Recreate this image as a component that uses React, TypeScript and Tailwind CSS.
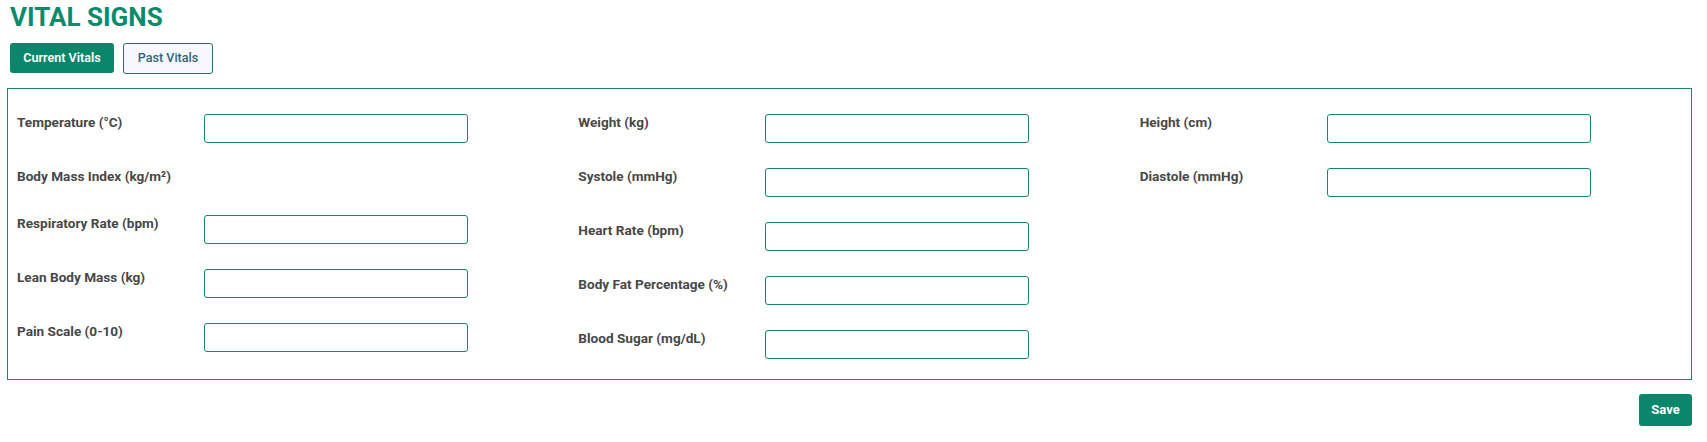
import React from 'react';

type Field = { label: string; input: boolean };

const columns: Field[][] = [
    [
        { label: 'Temperature (°C)', input: true },
        { label: 'Body Mass Index (kg/m²)', input: false },
        { label: 'Respiratory Rate (bpm)', input: true },
        { label: 'Lean Body Mass (kg)', input: true },
        { label: 'Pain Scale (0-10)', input: true },
    ],
    [
        { label: 'Weight (kg)', input: true },
        { label: 'Systole (mmHg)', input: true },
        { label: 'Heart Rate (bpm)', input: true },
        { label: 'Body Fat Percentage (%)', input: true },
        { label: 'Blood Sugar (mg/dL)', input: true },
    ],
    [
        { label: 'Height (cm)', input: true },
        { label: 'Diastole (mmHg)', input: true },
    ],
];

const FieldRow: React.FC<{ field: Field }> = ({ field }) => {
    return (
        <div className="flex items-start">
            <label className="w-[187px] shrink-0 text-[13.6px] font-bold leading-[16px] pb-[6px] text-[#484848]">
                {field.label}
            </label>
            {field.input && (
                <input
                    type="text"
                    className="w-[264px] h-[29px] rounded-[3px] border border-[#15876d] bg-white px-2 text-[13px] outline-none"
                />
            )}
        </div>
    );
};

const App: React.FC = () => {
    return (
        <div className="min-h-screen bg-white pt-[2px] pl-[7px] pr-[15px] font-['Roboto',sans-serif]">
            <h1 className="ml-[3px] text-[26px] font-bold leading-[30px] text-[#0b8a6c]">VITAL SIGNS</h1>

            <div className="mt-[11px] ml-[3px] flex gap-[9px]">
                <button className="h-[30px] w-[104px] rounded-[3px] bg-[#0a866b] text-[12.6px] font-semibold text-white">
                    Current Vitals
                </button>
                <button className="h-[31px] w-[90px] rounded-[3px] border border-[#2b6e6a] bg-[#f8f6ff] text-[12.6px] font-medium text-[#2f6672]">
                    Past Vitals
                </button>
            </div>

            <div className="mt-[14px] grid grid-cols-3 gap-x-[19px] border border-[#1a876d] pt-[25px] pb-[20px] pl-[9px] pr-[9px]">
                {columns.map((col, i) => (
                    <div key={i} className="flex flex-col gap-[25px]">
                        {col.map(field => (
                            <FieldRow key={field.label} field={field} />
                        ))}
                    </div>
                ))}
            </div>

            <div className="mt-[14px] flex justify-end">
                <button className="h-[32px] w-[53px] rounded-[3px] bg-[#0a866b] text-[13px] font-bold text-white">
                    Save
                </button>
            </div>
        </div>
    );
};

export default App;
